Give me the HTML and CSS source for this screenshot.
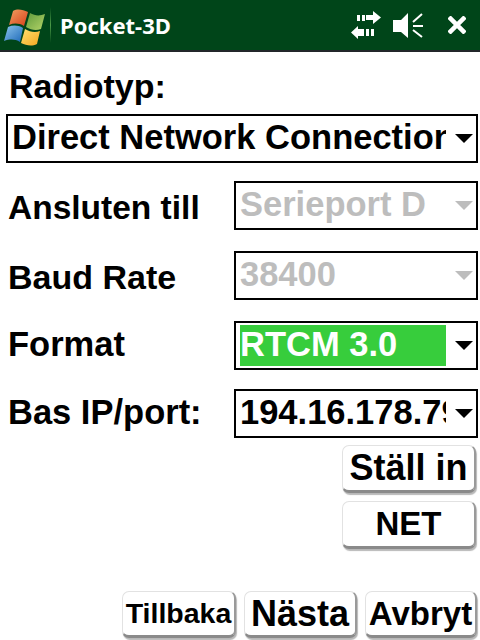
FILE: index.html
```html
<!DOCTYPE html>
<html lang="sv">
<head>
<meta charset="utf-8">
<title>Pocket-3D</title>
<link rel="stylesheet" href="styles.css">
</head>
<body>
<header class="titlebar">
  <svg class="flag" viewBox="0 0 48 48" width="48" height="48" aria-hidden="true">
    <defs>
      <linearGradient id="r" x1="0" y1="0" x2="1" y2="1"><stop offset="0" stop-color="#f0a060"/><stop offset="1" stop-color="#d8401c"/></linearGradient>
      <linearGradient id="g" x1="0" y1="0" x2="1" y2="1"><stop offset="0" stop-color="#5f9a3c"/><stop offset="1" stop-color="#b4d468"/></linearGradient>
      <linearGradient id="b" x1="0" y1="0" x2="1" y2="1"><stop offset="0" stop-color="#8cc4ec"/><stop offset="1" stop-color="#1c68b8"/></linearGradient>
      <linearGradient id="y" x1="0" y1="0" x2="1" y2="1"><stop offset="0" stop-color="#ffe070"/><stop offset="1" stop-color="#f4a820"/></linearGradient>
    </defs>
    <path fill="url(#r)" d="M13 9 C18 6 23 8 28 10 L24 24 C19 21 14 21 9 23 Z"/>
    <path fill="url(#g)" d="M30 11 C35 14 40 14 45 12 L41 27 C36 29 31 28 26 25 Z"/>
    <path fill="url(#b)" d="M8 25 C13 23 18 23 23 26 L20 40 C15 37 10 37 4 39 Z"/>
    <path fill="url(#y)" d="M25 27 C30 30 35 31 40 29 L37 42 C31 45 26 43 21 41 Z"/>
  </svg>
  <span class="divider"></span>
  <span class="app-title">Pocket-3D</span>
  <span class="tray">
    <svg class="ico-net" viewBox="350 10 30 32" width="30" height="32" aria-hidden="true">
      <path fill="#fff" d="M356 16h3v6h-3zM361 16h3v6h-3zM365 16h7v-4l8 6.500-8 6.500v-4h-7z"/>
      <path fill="#fff" d="M373 30h-3v7h3zM368 30h-3v7h3zM363 30h-6v-3l-7 6.500 7 6.500v-3h6z"/>
    </svg>
    <svg class="ico-vol" viewBox="392 10 30 32" width="30" height="32" aria-hidden="true">
      <path fill="#fff" d="M392 21h8l7-7v25l-7-6h-8z"/>
      <path stroke="#fff" stroke-width="2" fill="none" d="M412 23l9-8M412 27h10M412 31l9 7"/>
    </svg>
    <svg class="ico-close" viewBox="0 0 18 18" width="18" height="18" aria-hidden="true">
      <path stroke="#fff" stroke-width="4.500" d="M1 1l16 16M17 1L1 17"/>
    </svg>
  </span>
</header>
<main class="form">
  <div class="heading">Radiotyp:</div>
  <div class="select wide"><span class="value">Direct Network Connection</span><span class="arrow"></span></div>
  <div class="row row-first">
    <span class="label low fit">Ansluten till</span>
    <div class="select disabled"><span class="value">Serieport D</span><span class="arrow"></span></div>
  </div>
  <div class="row">
    <span class="label low baud">Baud Rate</span>
    <div class="select disabled"><span class="value">38400</span><span class="arrow"></span></div>
  </div>
  <div class="row">
    <span class="label high">Format</span>
    <div class="select focused"><span class="value">RTCM 3.0</span><span class="arrow"></span></div>
  </div>
  <div class="row row-tight">
    <span class="label high">Bas IP/port:</span>
    <div class="select"><span class="value">194.16.178.79</span><span class="arrow"></span></div>
  </div>
  <div class="side-buttons">
    <button class="btn set">Ställ in</button>
    <button class="btn net">NET</button>
  </div>
  <div class="nav-buttons">
    <button class="btn nav back">Tillbaka</button>
    <button class="btn nav next">Nästa</button>
    <button class="btn nav cancel">Avbryt</button>
  </div>
</main>
</body>
</html>
```
FILE: styles.css
```css
* { box-sizing: border-box; }
html, body { margin: 0; padding: 0; }
body {
  width: 480px;
  height: 640px;
  overflow: hidden;
  background: #fff;
  color: #000;
  font-family: "Liberation Sans", Arial, sans-serif;
  font-weight: 700;
}
.titlebar {
  height: 52px;
  display: flex;
  align-items: center;
  background: #004519;
  border-bottom: 2px solid #23262a;
  color: #fff;
  padding-right: 14px;
}
.flag { flex: none; margin-top: 2px; width: 48px; }
.divider {
  width: 1px;
  height: 36px;
  margin: 0 9px 0 2px;
  background: linear-gradient(#004519, #4c9a48 50%, #004519);
}
.app-title { font-family: "Noto Sans", sans-serif; font-size: 22px; font-weight: 700; }
.tray { margin-left: auto; display: flex; align-items: center; }
.ico-net { margin-right: 12px; }
.ico-vol { margin-right: 25px; }
.form { padding: 0 2px 0 6px; }
.heading { font-size: 34px; line-height: 38px; margin: 15px 0 9px 3px; }
.select {
  width: 244px;
  height: 49px;
  flex: none;
  border: 2px solid #000;
  display: flex;
  align-items: center;
  padding: 2px 3px 2px 4px;
  font-size: 34.5px;
  background: #fff;
}
.select.wide { width: 472px; }
.value {
  flex: 1;
  min-width: 0;
  height: 41px;
  line-height: 39px;
  white-space: nowrap;
  overflow: hidden;
}
.arrow {
  flex: none;
  margin-left: 9px;
  width: 0;
  height: 0;
  border-left: 9px solid transparent;
  border-right: 9px solid transparent;
  border-top: 9px solid #000;
}
.disabled { color: #bdbdbd; }
.disabled .arrow { border-top-color: #bdbdbd; }
.focused .value { background: #37cd3c; color: #fff; }
.row {
  display: flex;
  align-items: center;
  justify-content: space-between;
  margin-top: 21px;
}
.row-first { margin-top: 18px; }
.row-tight { margin-top: 19px; }
.label { font-size: 34.5px; padding-left: 2px; }
.label.fit { font-size: 33.5px; }
.label.baud { font-size: 34px; }
.label.low { padding-top: 4px; }
.label.high { padding-bottom: 2px; }
.btn {
  display: block;
  padding: 0;
  background: #fff;
  color: #000;
  font-family: "Liberation Sans", Arial, sans-serif;
  font-weight: 700;
  font-size: 34px;
  border: 1px solid #e2e2e2;
  border-right: 2px solid #9a9a9a;
  border-bottom: 3px solid #8a8a8a;
  border-radius: 7px;
  box-shadow: 1px 2px 1px #b8b8b8;
  white-space: nowrap;
  overflow: hidden;
}
.side-buttons {
  display: flex;
  flex-direction: column;
  align-items: flex-end;
  gap: 8px;
  margin-top: 7px;
  padding-right: 2px;
}
.side-buttons .btn { width: 134px; height: 48px; }
.side-buttons .set { font-size: 36px; }
.side-buttons .net { font-size: 33px; }
.nav-buttons {
  display: flex;
  margin-top: 42px;
  margin-left: 116px;
  gap: 8px;
}
.nav { height: 47px; }
.back { width: 114px; font-size: 28.5px; }
.next { width: 113px; font-size: 36px; }
.cancel { width: 112px; font-size: 33px; }
```
